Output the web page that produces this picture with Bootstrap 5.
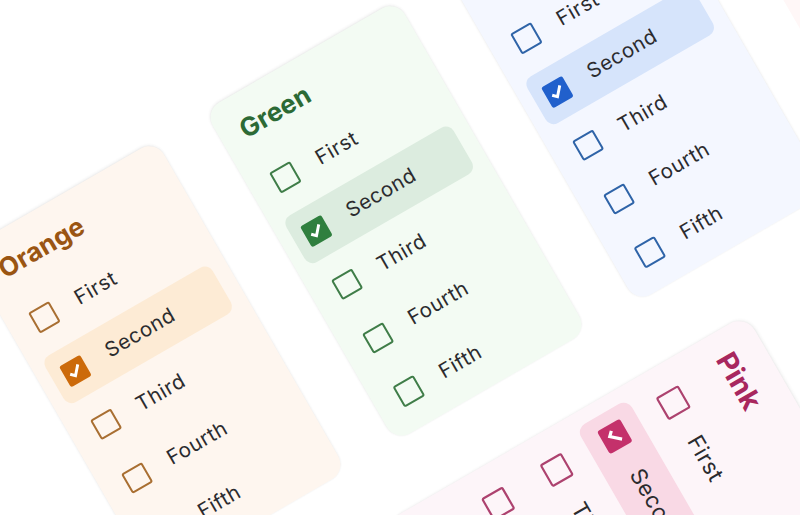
<!doctype html>
<html lang="en">
<head>
<meta charset="utf-8">
<title>Checkbox colours</title>
<link rel="stylesheet" href="https://cdn.jsdelivr.net/npm/bootstrap@5.3.0/dist/css/bootstrap.min.css">
<style>
html,body{margin:0;background:#fff;overflow:hidden}
.stage{width:800px;height:515px;font-family:Inter,"Liberation Sans",sans-serif}
.swatch-card{position:absolute;width:221.5px;height:382px;margin:-191px 0 0 -110.75px;padding:21px 16px 0 13px;border-radius:17px;background:var(--bg);box-shadow:0 -1px 3px rgba(60,60,60,.09),0 0 2px rgba(60,60,60,.04)}
.swatch-title{font-size:26px;line-height:30px;font-weight:700;color:var(--ink);margin:0 0 20px 9px;letter-spacing:.2px}
.swatch-list{gap:7.8px}
.swatch-row{height:54px;padding-left:12px;gap:25px;border-radius:9px;font-size:20.5px;letter-spacing:.6px;color:#2b2b2e}
.swatch-row.on{background:var(--hi)}
.tick{flex:none;width:23.5px;height:23.5px;border:2.7px solid var(--line);border-radius:2.5px}
.on .tick{background:var(--solid);border-color:var(--solid)}
.tick svg{display:block;width:100%;height:100%}
.c-orange{--bg:#fef6ef;--hi:#fdebd5;--ink:#9a5512;--line:#a96f32;--solid:#cc6a0a;left:154.3px;top:360.8px;transform:rotate(-30deg)}
.c-green{--bg:#f3fbf3;--hi:#dcecdf;--ink:#2c6a35;--line:#3f7d48;--solid:#2f7f3e;left:395.4px;top:220.8px;transform:rotate(-30deg)}
.c-blue{--bg:#f4f7ff;--hi:#d6e4fb;--ink:#2459b8;--line:#2f64a8;--solid:#2160cc;left:636.6px;top:82.2px;transform:rotate(-30deg)}
.c-pink{--bg:#fdf5f9;--hi:#f9d9e5;--ink:#a8275e;--line:#ad426f;--solid:#c4316b;left:625.3px;top:523.3px;transform:rotate(60deg) scale(1.09)}
.c-rose{--bg:#fff7f7;left:878px;top:-58px;transform:rotate(-30deg);box-shadow:none}
</style>
</head>
<body>
<div class="stage position-relative overflow-hidden">
<div class="swatch-card c-rose"></div>
<section class="swatch-card c-orange d-flex flex-column gap-0">
<h2 class="swatch-title">Orange</h2>
<div class="d-flex flex-column swatch-list">
<div class="swatch-row d-flex align-items-center"><span class="tick"></span><span>First</span></div>
<div class="swatch-row on d-flex align-items-center"><span class="tick"><svg viewBox="0 0 18 18"><path d="M3.6 9.4l3.6 3.6 7-8" fill="none" stroke="#fff" stroke-width="2.7"/></svg></span><span>Second</span></div>
<div class="swatch-row d-flex align-items-center"><span class="tick"></span><span>Third</span></div>
<div class="swatch-row d-flex align-items-center"><span class="tick"></span><span>Fourth</span></div>
<div class="swatch-row d-flex align-items-center"><span class="tick"></span><span>Fifth</span></div>
</div>
</section>
<section class="swatch-card c-green d-flex flex-column gap-0">
<h2 class="swatch-title">Green</h2>
<div class="d-flex flex-column swatch-list">
<div class="swatch-row d-flex align-items-center"><span class="tick"></span><span>First</span></div>
<div class="swatch-row on d-flex align-items-center"><span class="tick"><svg viewBox="0 0 18 18"><path d="M3.6 9.4l3.6 3.6 7-8" fill="none" stroke="#fff" stroke-width="2.7"/></svg></span><span>Second</span></div>
<div class="swatch-row d-flex align-items-center"><span class="tick"></span><span>Third</span></div>
<div class="swatch-row d-flex align-items-center"><span class="tick"></span><span>Fourth</span></div>
<div class="swatch-row d-flex align-items-center"><span class="tick"></span><span>Fifth</span></div>
</div>
</section>
<section class="swatch-card c-blue d-flex flex-column gap-0">
<h2 class="swatch-title">Blue</h2>
<div class="d-flex flex-column swatch-list">
<div class="swatch-row d-flex align-items-center"><span class="tick"></span><span>First</span></div>
<div class="swatch-row on d-flex align-items-center"><span class="tick"><svg viewBox="0 0 18 18"><path d="M3.6 9.4l3.6 3.6 7-8" fill="none" stroke="#fff" stroke-width="2.7"/></svg></span><span>Second</span></div>
<div class="swatch-row d-flex align-items-center"><span class="tick"></span><span>Third</span></div>
<div class="swatch-row d-flex align-items-center"><span class="tick"></span><span>Fourth</span></div>
<div class="swatch-row d-flex align-items-center"><span class="tick"></span><span>Fifth</span></div>
</div>
</section>
<section class="swatch-card c-pink d-flex flex-column gap-0">
<h2 class="swatch-title">Pink</h2>
<div class="d-flex flex-column swatch-list">
<div class="swatch-row d-flex align-items-center"><span class="tick"></span><span>First</span></div>
<div class="swatch-row on d-flex align-items-center"><span class="tick"><svg viewBox="0 0 18 18"><path d="M3.6 9.4l3.6 3.6 7-8" fill="none" stroke="#fff" stroke-width="2.7"/></svg></span><span>Second</span></div>
<div class="swatch-row d-flex align-items-center"><span class="tick"></span><span>Third</span></div>
<div class="swatch-row d-flex align-items-center"><span class="tick"></span><span>Fourth</span></div>
<div class="swatch-row d-flex align-items-center"><span class="tick"></span><span>Fifth</span></div>
</div>
</section>
</div>
<script src="https://cdn.jsdelivr.net/npm/bootstrap@5.3.0/dist/js/bootstrap.bundle.min.js"></script>
</body>
</html>
